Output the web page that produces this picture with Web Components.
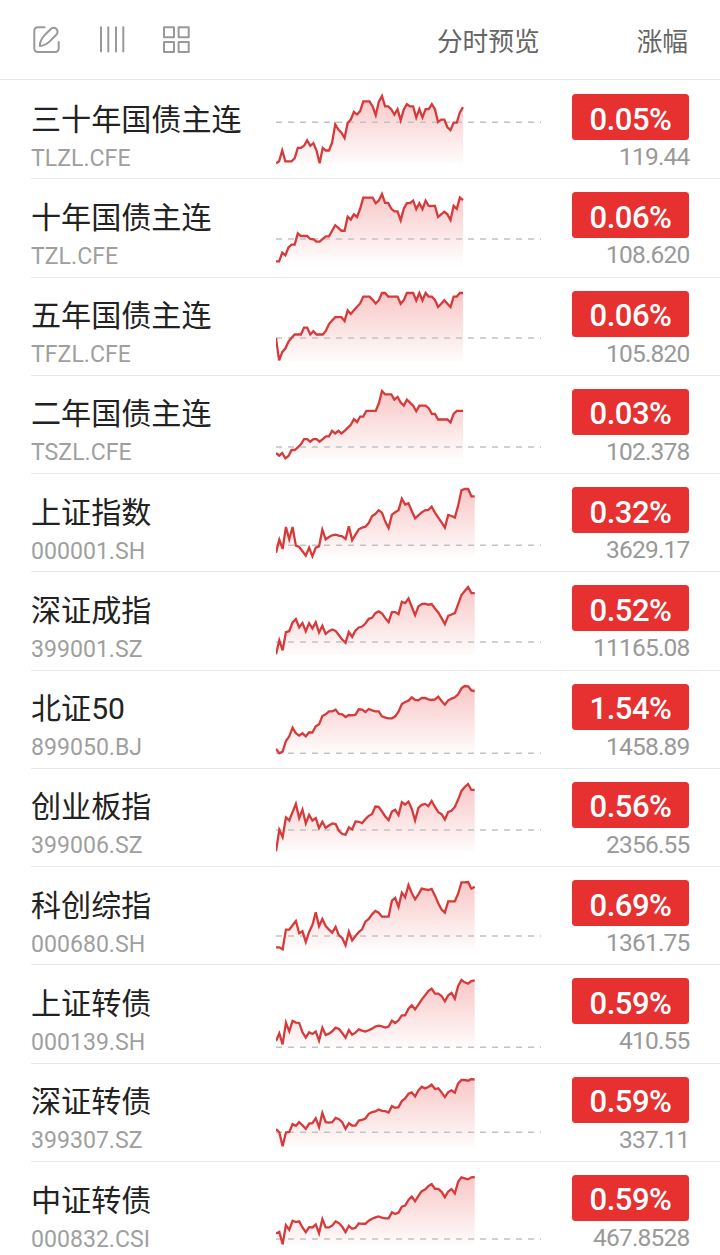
<!DOCTYPE html>
<html lang="zh-CN">
<head>
<meta charset="utf-8">
<title>自选</title>
<style>
    html, body {
        margin: 0;
        height: 1255px;
        overflow: hidden;
        background: #fff;
    }

    body {
        font-family: Roboto, "Noto Sans CJK SC", sans-serif;
    }
</style>
</head>
<body>
<quote-board></quote-board>

<script>
// y readings run downwards, base is the previous close on the same scale
const QUOTES = [
    { name: '三十年国债主连', code: 'TLZL.CFE', change: '0.05%', price: '119.44', width: 187, base: 111,
      line: [233,227,195,227,227,227,218,187,187,181,165,181,173,195,233,187,195,195,172,117,133,142,158,113,103,80,88,78,49,49,49,64,90,50,33,64,64,73,88,72,105,73,57,64,64,97,72,97,72,72,57,72,110,103,103,126,134,112,112,82,66] },
    { name: '十年国债主连', code: 'TZL.CFE', change: '0.06%', price: '108.620', width: 187, base: 462,
      line: [530,530,504,512,488,479,479,445,453,453,453,462,463,470,470,462,454,454,437,420,428,437,437,394,403,387,395,370,336,336,336,336,353,345,325,352,352,370,378,378,405,370,353,353,345,371,353,371,345,361,361,361,395,387,379,387,404,361,370,336,344] },
    { name: '五年国债主连', code: 'TFZL.CFE', change: '0.06%', price: '105.820', width: 187, base: 175,
      line: [175,243,218,207,186,174,164,164,164,143,143,164,154,164,164,164,153,132,121,111,111,111,123,90,101,90,79,69,48,48,48,58,69,59,37,37,48,48,48,48,70,59,37,37,37,60,37,60,37,48,48,58,80,70,59,70,80,48,48,37,37] },
    { name: '二年国债主连', code: 'TSZL.CFE', change: '0.03%', price: '102.378', width: 187, base: 499,
      line: [517,525,517,533,526,508,508,500,491,475,475,483,475,475,483,475,467,467,450,458,450,458,450,441,432,415,424,407,407,390,390,390,390,367,330,340,340,340,356,348,365,374,356,365,374,391,374,374,374,382,399,399,416,416,416,416,425,399,390,390,390] },
    { name: '上证指数', code: '000001.SH', change: '0.32%', price: '3629.17', width: 198.7, base: 202,
      line: [224,185,213,147,184,147,203,207,220,233,209,235,209,205,155,184,177,172,170,173,175,183,145,187,170,154,149,146,135,114,108,97,104,131,150,110,103,97,62,80,76,99,121,112,103,97,96,86,104,119,133,149,111,114,119,83,37,33,33,55,55] },
    { name: '深证成指', code: '399001.SZ', change: '0.52%', price: '11165.08', width: 198.7, base: 490,
      line: [527,485,515,461,458,432,422,447,434,458,434,450,431,462,442,466,458,453,457,470,483,493,460,475,456,447,444,435,421,418,404,399,405,419,431,401,401,407,370,374,360,385,410,384,377,376,379,377,390,402,419,437,412,408,404,377,350,338,326,344,344] },
    { name: '北证50', code: '899050.BJ', change: '1.54%', price: '1458.89', width: 198.7, base: 235,
      line: [221,235,230,198,184,158,175,182,175,184,172,173,154,148,123,118,109,109,104,117,118,126,120,121,119,103,104,111,102,106,109,109,124,128,130,130,124,110,87,81,77,67,75,76,69,69,73,75,73,65,78,89,76,71,67,58,40,33,34,46,48] },
    { name: '创业板指', code: '399006.SZ', change: '0.56%', price: '2356.55', width: 198.7, base: 466,
      line: [530,465,487,428,437,412,387,430,404,446,420,437,430,460,441,459,452,446,448,468,478,480,458,464,440,441,445,433,423,418,395,396,410,425,436,410,405,421,382,389,380,402,437,399,390,387,394,378,396,412,418,434,411,408,396,374,348,336,327,345,345] },
    { name: '科创综指', code: '000680.SH', change: '0.69%', price: '1361.75', width: 198.7, base: 194,
      line: [228,228,234,175,175,162,149,186,180,212,182,161,123,165,143,164,175,184,167,192,200,222,181,207,194,182,174,151,143,129,119,124,136,136,136,88,80,107,64,78,41,65,84,69,52,54,56,53,73,96,115,124,90,90,90,67,33,33,32,52,46] },
    { name: '上证转债', code: '000139.SH', change: '0.59%', price: '410.55', width: 198.7, base: 527,
      line: [508,485,518,453,479,448,453,454,482,498,482,487,480,507,468,490,486,479,468,472,484,498,475,489,483,473,477,480,476,471,465,462,464,468,465,447,454,446,431,431,411,401,413,399,384,371,358,351,366,366,373,389,371,364,381,343,325,332,336,328,326] },
    { name: '深证转债', code: '399307.SZ', change: '0.59%', price: '337.11', width: 198.7, base: 200,
      line: [191,200,242,201,199,176,181,170,179,190,174,173,158,185,142,170,171,170,157,161,170,190,173,180,180,165,163,159,145,140,138,132,136,137,141,122,127,125,107,99,85,81,93,75,64,69,65,58,71,69,81,95,80,75,82,54,44,44,46,41,43] },
    { name: '中证转债', code: '000832.CSI', change: '0.59%', price: '467.8528', width: 198.7, base: 521,
      line: [505,500,537,480,494,467,471,469,487,501,486,487,478,504,462,487,487,481,469,474,485,501,482,491,488,475,476,476,467,461,457,454,458,460,460,442,447,443,425,422,405,395,409,393,379,374,364,358,372,372,381,397,380,373,386,351,338,341,344,338,337] }
]

class BoardHeader extends HTMLElement {

    constructor() {
        super()
        this.attachShadow({ mode: 'open' })
        this.shadowRoot.innerHTML = `
            <style>
                :host {
                    display: flex;
                    align-items: center;
                    box-sizing: border-box;
                    height: 80px;
                    padding: 0 32px 0 31px;
                    border-bottom: 1px solid #e6e6e6;
                    color: #666;
                    font-size: 25.7px;
                    line-height: 38px;
                }

                .tools {
                    display: flex;
                    gap: 35px;
                    flex: 1;
                }

                svg {
                    display: block;
                    width: 30px;
                    height: 30px;
                    fill: none;
                    stroke: #999;
                    stroke-width: 2;
                    stroke-linecap: round;
                    stroke-linejoin: round;
                }

                .preview {
                    margin-right: 97px;
                }

                span {
                    padding-top: 5px;
                }
            </style>
            <div class="tools">
                <svg viewBox="0 0 30 30">
                    <path d="M13.500 2.300H7Q3.300 2.300 3.300 6V23.300Q3.300 27 7 27H24Q27.700 27 27.700 23.300V17"/>
                    <path d="M8.800 21C8.800 16.500 11 13 14 9.700L19.500 4.200C21.200 2.500 23.800 2.400 25.400 3.900C27 5.400 27 8 25.300 9.700L19.500 15.600C16.200 18.900 13.500 20.700 8.800 21Z"/>
                </svg>
                <svg viewBox="0 0 30 30">
                    <path d="M5 2.300V26.500M12.300 2.300V26.500M20 2.300V26.500M27.300 2.300V26.500"/>
                </svg>
                <svg viewBox="0 0 30 30">
                    <path d="M3 2.300H13V12.300H3ZM17.600 2.300H27.700V12.300H17.600ZM3 17H13V27H3ZM17.600 17H27.700V27H17.600Z"/>
                </svg>
            </div>
            <span class="preview">分时预览</span>
            <span>涨幅</span>
        `
    }

}

class SparkLine extends HTMLElement {

    constructor() {
        super()
        this.attachShadow({ mode: 'open' })
    }

    set quote({ line, base, width }) {
        const top = 15
        const height = 67.3
        const min = Math.min(base, ...line)
        const max = Math.max(base, ...line)
        const scale = v => (top + (v - min) / (max - min) * height).toFixed(2)
        const points = line.map((v, i) => `${(i * width / (line.length - 1)).toFixed(2)},${scale(v)}`).join(' ')

        this.shadowRoot.innerHTML = `
            <style>
                :host {
                    display: block;
                    width: 265px;
                    height: 98px;
                }

                svg {
                    display: block;
                }

                .base {
                    stroke: #c2c2c2;
                    stroke-width: 1.5;
                    stroke-dasharray: 6 6;
                }

                .line {
                    fill: none;
                    stroke: #d63a3a;
                    stroke-width: 2.3;
                    stroke-linejoin: miter;
                }
            </style>
            <svg width="265" height="98" viewBox="0 0 265 98">
                <defs>
                    <linearGradient id="fade" gradientUnits="userSpaceOnUse" x1="0" y1="15" x2="0" y2="84">
                        <stop offset="0" stop-color="#e62e2e" stop-opacity=".27"/>
                        <stop offset="1" stop-color="#e62e2e" stop-opacity=".01"/>
                    </linearGradient>
                </defs>
                <polygon fill="url(#fade)" points="0,83 ${points} ${width},83"/>
                <line class="base" x1="0" x2="265" y1="${scale(base)}" y2="${scale(base)}"/>
                <polyline class="line" points="${points}"/>
            </svg>
        `
    }

}

class ChangeBadge extends HTMLElement {

    constructor() {
        super()
        this.attachShadow({ mode: 'open' })
        this.shadowRoot.innerHTML = `
            <style>
                :host {
                    display: flex;
                    align-items: center;
                    justify-content: center;
                    box-sizing: border-box;
                    width: 117px;
                    height: 46px;
                    padding-top: 4px;
                    border-radius: 3.500px;
                    background: #e73030;
                    color: #fff;
                    font-size: 31px;
                    font-weight: 500;
                    letter-spacing: -.5px;
                }
            </style>
            <slot></slot>
        `
    }

}

class QuoteRow extends HTMLElement {

    constructor() {
        super()
        this.attachShadow({ mode: 'open' })
        this.shadowRoot.innerHTML = `
            <style>
                :host {
                    display: flex;
                    box-sizing: border-box;
                    height: 98.28px;
                    margin-left: 31px;
                    padding-right: 31px;
                    border-bottom: 1px solid #e8e8e8;
                }

                .title {
                    width: 245px;
                    padding-top: 16.600px;
                    white-space: nowrap;
                }

                .name {
                    color: #222;
                    font-size: 30.100px;
                    line-height: 44px;
                }

                .code {
                    color: #9f9f9f;
                    font-size: 23.100px;
                    line-height: 33px;
                }

                .value {
                    display: flex;
                    flex-direction: column;
                    align-items: flex-end;
                    flex: 1;
                    padding-top: 13px;
                }

                .price {
                    margin-right: -.5px;
                    color: #999;
                    font-size: 24.500px;
                    line-height: 33px;
                    letter-spacing: -.8px;
                }
            </style>
            <div class="title">
                <div class="name"><slot name="name"></slot></div>
                <div class="code"><slot name="code"></slot></div>
            </div>
            <spark-line></spark-line>
            <div class="value">
                <change-badge><slot name="change"></slot></change-badge>
                <div class="price"><slot name="price"></slot></div>
            </div>
        `
    }

    set quote(quote) {
        this.innerHTML = ['name', 'code', 'change', 'price']
            .map(key => `<span slot="${key}">${quote[key]}</span>`)
            .join('')
        this.shadowRoot.querySelector('spark-line').quote = quote
    }

}

class QuoteBoard extends HTMLElement {

    constructor() {
        super()
        this.attachShadow({ mode: 'open' })
        this.shadowRoot.innerHTML = `
            <style>
                :host {
                    display: block;
                    width: 720px;
                }

                .list {
                    padding-top: 1px;
                }
            </style>
            <board-header></board-header>
            <div class="list"></div>
        `
        const list = this.shadowRoot.querySelector('.list')
        QUOTES.forEach(quote => {
            const row = document.createElement('quote-row')
            row.quote = quote
            list.append(row)
        })
    }

}

window.customElements.define('board-header', BoardHeader)
window.customElements.define('spark-line', SparkLine)
window.customElements.define('change-badge', ChangeBadge)
window.customElements.define('quote-row', QuoteRow)
window.customElements.define('quote-board', QuoteBoard)
</script>
</body>
</html>
